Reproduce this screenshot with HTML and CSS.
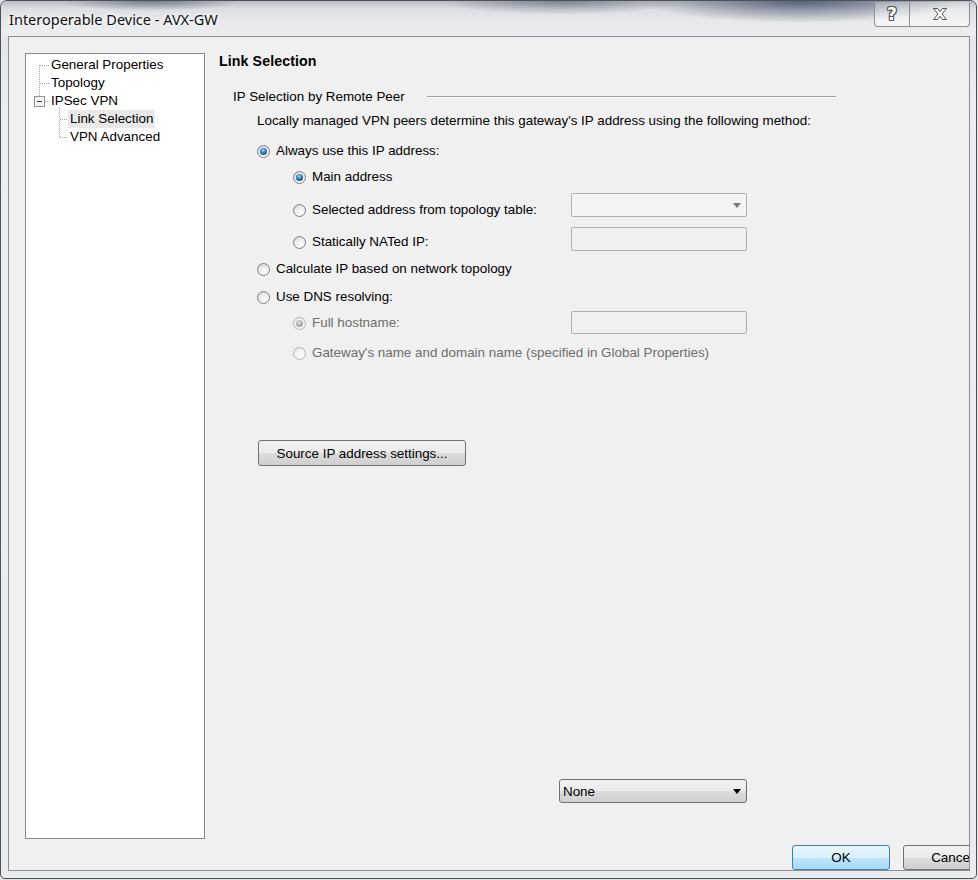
FILE: index.html
```html
<!DOCTYPE html>
<html>
<head>
<meta charset="utf-8">
<title>Interoperable Device - AVX-GW</title>
<link rel="stylesheet" href="styles.css">
</head>
<body>
<div class="window">
  <div class="titlebar">
    <div class="title">Interoperable Device - AVX-GW</div>
    <div class="caption-buttons">
      <div class="cap-btn cap-help"><span class="help-glyph">?</span></div>
      <div class="cap-btn cap-close">
        <svg width="16" height="14" viewBox="0 0 16 14"><polygon points="1.5,1.5 5.5,1.5 8,4.8 10.5,1.5 14.5,1.5 10,7 14.5,12.5 10.5,12.5 8,9.2 5.5,12.5 1.5,12.5 6,7" fill="#fff" stroke="#4d4d4d" stroke-width="1" stroke-linejoin="round"/></svg>
      </div>
    </div>
  </div>
  <div class="client">
    <div class="tree">
      <svg class="tree-lines" width="60" height="90" viewBox="0 0 60 90">
        <g stroke="#a0a0a0" stroke-width="1" stroke-dasharray="1 1" fill="none">
          <line x1="13.5" y1="11" x2="13.5" y2="42"/>
          <line x1="14" y1="11.5" x2="24" y2="11.5"/>
          <line x1="14" y1="29.5" x2="24" y2="29.5"/>
          <line x1="19" y1="47.5" x2="24" y2="47.5"/>
          <line x1="33.5" y1="54" x2="33.5" y2="84"/>
          <line x1="34" y1="65.5" x2="42" y2="65.5"/>
          <line x1="34" y1="83.5" x2="42" y2="83.5"/>
        </g>
        <rect x="8.5" y="42.5" width="10" height="10" fill="#f4f4f4" stroke="#919191"/>
        <line x1="11" y1="47.5" x2="16" y2="47.5" stroke="#3a3a3a"/>
      </svg>
      <div class="tree-item l0">General Properties</div>
      <div class="tree-item l0">Topology</div>
      <div class="tree-item l0">IPSec VPN</div>
      <div class="tree-item l1"><span class="sel">Link Selection</span></div>
      <div class="tree-item l1"><span>VPN Advanced</span></div>
    </div>
    <div class="main">
      <div class="heading">Link Selection</div>
      <div class="group">
        <span class="group-title">IP Selection by Remote Peer</span>
        <span class="group-line"></span>
      </div>
      <div class="desc">Locally managed VPN peers determine this gateway's IP address using the following method:</div>

      <div class="opt r1"><span class="radio on"></span>Always use this IP address:</div>
      <div class="opt r2"><span class="radio on"></span>Main address</div>

      <div class="ctlrow r3">
        <div class="opt lbl"><span class="radio"></span>Selected address from topology table:</div>
        <div class="combo disabled"><span class="arrow"></span></div>
      </div>
      <div class="ctlrow r4">
        <div class="opt lbl"><span class="radio"></span>Statically NATed IP:</div>
        <div class="textbox disabled"></div>
      </div>

      <div class="opt r5"><span class="radio"></span>Calculate IP based on network topology</div>
      <div class="opt r6"><span class="radio"></span>Use DNS resolving:</div>

      <div class="ctlrow r7">
        <div class="opt lbl dis"><span class="radio on dis"></span>Full hostname:</div>
        <div class="textbox disabled"></div>
      </div>
      <div class="opt r8 dis"><span class="radio dis"></span>Gateway's name and domain name (specified in Global Properties)</div>

      <div class="btn src-btn">Source IP address settings...</div>

      <div class="combo none-combo"><span class="combo-text">None</span><span class="arrow dark"></span></div>

      <div class="dlg-buttons">
        <div class="btn ok">OK</div>
        <div class="btn cancel">Cancel</div>
      </div>
    </div>
  </div>
</div>
</body>
</html>
```

FILE: styles.css
```css
html, body {
  margin: 0;
  padding: 0;
  background: #dfe2e6;
}
body {
  width: 978px;
  height: 880px;
  overflow: hidden;
  font-family: "Liberation Sans", Arial, sans-serif;
  font-size: 13.4px;
  color: #000;
}
.window {
  box-sizing: border-box;
  width: 977px;
  height: 879px;
  border: 1px solid #4e5157;
  border-radius: 7px 7px 5px 5px;
  padding: 0 6px 7px 7px;
  background: linear-gradient(to bottom, #cfd3d9 0px, #e4e6e9 30px, #eceef0 120px, #e9ebee 100%);
  display: flex;
  flex-direction: column;
  overflow: hidden;
}
.titlebar {
  height: 35px;
  flex: none;
  display: flex;
  align-items: flex-start;
  margin: 0 -6px 0 -7px;
  padding-left: 8px;
  padding-right: 6px;
  background:
    radial-gradient(ellipse 160px 22px at 800px 0px, rgba(70,80,105,0.85), rgba(70,80,105,0) 100%),
    radial-gradient(ellipse 120px 14px at 560px 0px, rgba(60,70,90,0.5), rgba(60,70,90,0) 100%),
    radial-gradient(ellipse 90px 10px at 150px 0px, rgba(60,70,90,0.55), rgba(60,70,90,0) 100%),
    linear-gradient(to bottom, #b9bec6 0px, #dcdfe3 8px, #e6e8eb 20px, #eceef0 35px);
  border-radius: 6px 6px 0 0;
}
.title {
  font-family: "Noto Sans", "Open Sans", sans-serif;
  font-size: 14.5px;
  line-height: 20px;
  margin-top: 8px;
  color: #111;
  text-shadow: 0 0 6px #fff, 0 0 6px #fff;
  flex: 1;
}
.caption-buttons {
  display: flex;
  margin-top: 1px;
}
.cap-btn {
  box-sizing: border-box;
  height: 25px;
  border: 1px solid #8a8d92;
  border-top: none;
  display: flex;
  align-items: center;
  justify-content: center;
  background: linear-gradient(to bottom, rgba(255,255,255,0.25), rgba(255,255,255,0.55));
}
.cap-help {
  width: 36px;
  border-radius: 0 0 0 4px;
}
.cap-close {
  width: 60px;
  border-left: none;
  border-radius: 0 0 4px 0;
}
.help-glyph {
  font-family: "DejaVu Sans", sans-serif;
  font-weight: bold;
  font-size: 17px;
  line-height: 18px;
  color: #fff;
  text-shadow: 1px 0 0 #555, -1px 0 0 #555, 0 1px 0 #555, 0 -1px 0 #555, 1px 1px 0 #555, -1px -1px 0 #555, 1px -1px 0 #555, -1px 1px 0 #555;
}
.client {
  flex: 1;
  box-sizing: border-box;
  border: 1px solid #8b8e93;
  background: #f0f0f0;
  padding: 16px 0 0 16px;
  display: flex;
  overflow: hidden;
}
.tree {
  position: relative;
  box-sizing: border-box;
  width: 180px;
  height: 786px;
  flex: none;
  background: #fff;
  border: 1px solid #828790;
  padding-top: 2px;
}
.tree-lines {
  position: absolute;
  left: 0;
  top: 0;
}
.tree-item {
  height: 18px;
  line-height: 18px;
  white-space: nowrap;
}
.tree-item.l0 {
  padding-left: 25px;
}
.tree-item.l1 {
  padding-left: 42px;
}
.tree-item.l1 span {
  display: inline-block;
  padding: 0 2px;
  height: 18px;
}
.tree-item .sel {
  background: #e8e8e8;
}
.main {
  flex: 1;
  margin-left: 14px;
  min-width: 0;
}
.heading {
  font-weight: bold;
  font-size: 14.2px;
  letter-spacing: 0.1px;
  height: 16px;
  line-height: 16px;
}
.group {
  margin-top: 20px;
  height: 16px;
  line-height: 16px;
  display: flex;
  align-items: center;
  padding-left: 14px;
}
.group-title {
  width: 194px;
  flex: none;
}
.group-line {
  width: 409px;
  height: 0;
  border-top: 1px solid #a0a0a0;
  border-bottom: 1px solid #ffffff;
}
.desc {
  margin-top: 8px;
  height: 16px;
  line-height: 16px;
  padding-left: 38px;
  white-space: nowrap;
}
.opt {
  display: flex;
  align-items: center;
  height: 16px;
  line-height: 16px;
  white-space: nowrap;
}
.radio {
  position: relative;
  box-sizing: border-box;
  width: 13px;
  height: 13px;
  flex: none;
  border-radius: 50%;
  border: 1px solid #7f8286;
  background: radial-gradient(circle at 65% 70%, #fdfdfd 0, #eeeeee 45%, #cbcbcb 100%);
  margin-right: 6px;
}
.radio.on::after {
  content: "";
  position: absolute;
  left: 2px;
  top: 2px;
  width: 7px;
  height: 7px;
  border-radius: 50%;
  background: radial-gradient(circle at 45% 35%, #a9dcff 0, #3f8cd3 35%, #164a87 75%, #0d2f5c 100%);
}
.radio.dis {
  border-color: #b5b5b5;
  background: radial-gradient(circle at 65% 70%, #fcfcfc 0, #f2f2f2 50%, #e2e2e2 100%);
}
.radio.on.dis::after {
  background: radial-gradient(circle at 45% 35%, #e6e6e6 0, #b0b0b0 50%, #8c8c8c 100%);
}
.dis {
  color: #6d6d6d;
}
.r1 { margin-top: 14px; padding-left: 38px; }
.r2 { margin-top: 10px; padding-left: 74px; }
.r5 { margin-top: 10px; padding-left: 38px; }
.r6 { margin-top: 12px; padding-left: 38px; }
.r8 { margin-top: 10px; padding-left: 74px; }
.ctlrow {
  width: 528px;
  height: 24px;
  display: flex;
  justify-content: space-between;
  align-items: flex-start;
  box-sizing: border-box;
  padding-left: 74px;
}
.r3 { margin-top: 8px; }
.r3 .lbl { margin-top: 9px; }
.r4 { margin-top: 10px; }
.r4 .lbl { margin-top: 7px; }
.r7 { margin-top: 6px; }
.r7 .lbl { margin-top: 4px; }
.combo, .textbox {
  box-sizing: border-box;
  width: 176px;
  height: 24px;
  flex: none;
  border-radius: 2px;
  position: relative;
}
.combo.disabled {
  border: 1px solid #b1b1b1;
  background: #f4f4f4;
}
.textbox.disabled {
  border: 1px solid #b1b1b1;
  background: #f0f0f0;
}
.r7 .textbox {
  height: 23px;
}
.arrow {
  position: absolute;
  right: 5px;
  top: 9px;
  width: 0;
  height: 0;
  border-left: 4px solid transparent;
  border-right: 4px solid transparent;
  border-top: 5px solid #7a7a7a;
}
.arrow.dark {
  border-top-color: #000;
  top: 9px;
}
.btn {
  box-sizing: border-box;
  border: 1px solid #707070;
  border-radius: 3px;
  background: linear-gradient(to bottom, #f2f2f2 0%, #ebebeb 50%, #dddddd 51%, #cfcfcf 100%);
  display: flex;
  align-items: center;
  justify-content: center;
  white-space: nowrap;
}
.src-btn {
  margin-top: 79px;
  margin-left: 39px;
  width: 208px;
  height: 26px;
}
.none-combo {
  margin-top: 313px;
  margin-left: 340px;
  width: 188px;
  height: 24px;
  border: 1px solid #707070;
  border-radius: 3px;
  background: linear-gradient(to bottom, #f2f2f2 0%, #ebebeb 50%, #dddddd 51%, #cfcfcf 100%);
  display: flex;
  align-items: center;
}
.combo-text {
  padding-left: 3px;
}
.dlg-buttons {
  margin-top: 42px;
  display: flex;
  padding-left: 573px;
}
.dlg-buttons .btn {
  flex: none;
  width: 98px;
  height: 25px;
}
.btn.ok {
  border-color: #3c7fb1;
  background: linear-gradient(to bottom, #eaf6fd 0%, #d9f0fc 50%, #bee6fd 51%, #a7d9f5 100%);
}
.btn.cancel {
  margin-left: 13px;
}
```
